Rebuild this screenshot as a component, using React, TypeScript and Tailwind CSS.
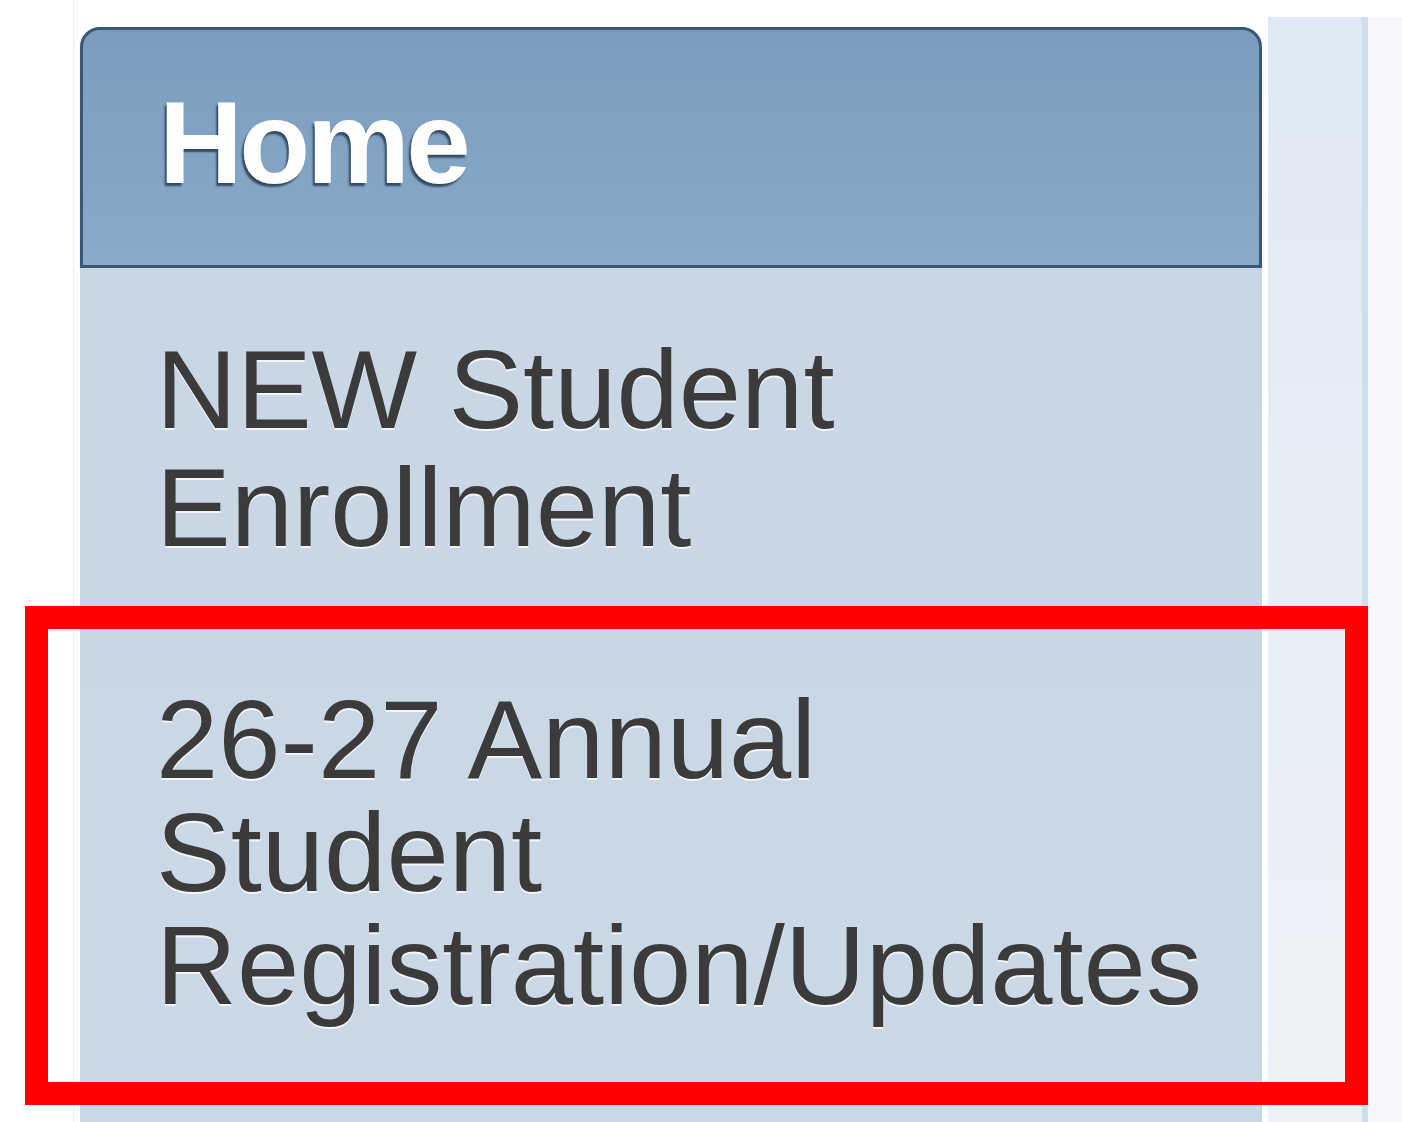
import React from "react";

interface NavItem {
  id: string;
  lines: string[];
  padTop: string;
  leading: string;
  height: string;
  highlighted?: boolean;
}

const items: NavItem[] = [
  {
    id: "enroll",
    lines: ["NEW Student", "Enrollment"],
    padTop: "pt-[63px]",
    leading: "leading-[118px]",
    height: "h-[338px]",
  },
  {
    id: "annual",
    lines: ["26-27 Annual", "Student", "Registration/Updates"],
    padTop: "pt-[77px]",
    leading: "leading-[113px]",
    height: "h-[477px]",
    highlighted: true,
  },
];

export default function App() {
  return (
    <div className="relative h-[1122px] w-full overflow-hidden bg-white font-['Liberation_Sans',Arial,sans-serif]">
      <div className="flex h-full pl-[73px]">
        {/* left menu column */}
        <div className="flex w-[1195px] flex-col border-l border-[#ececec] bg-white pl-[6px] pr-[6px] pt-[27px]">
          <div className="h-[241px] rounded-t-[20px] border-[3px] border-[#3a5873] bg-gradient-to-b from-[#7a9cbe] to-[#89aac9] pl-[76px] pt-[55px] shadow-[0_1px_2px_rgba(0,0,0,0.15)]">
            <span className="block text-[116px] font-bold leading-[116px] tracking-[-3.5px] text-white [text-shadow:-2px_3px_2px_rgba(38,58,80,0.85)]">
              Home
            </span>
          </div>
          <div className="flex-1 bg-gradient-to-b from-[#c9d7e5] to-[#cbd8e6]">
            {items.map((item) => (
              <div
                key={item.id}
                className={`${item.height} ${item.padTop} border-b border-[#b9d2ea] pl-[76px]`}
              >
                {item.lines.map((line) => (
                  <div
                    key={line}
                    className={`${item.leading} whitespace-nowrap text-[112px] text-[#3b3b3b] [text-shadow:0_2px_0_rgba(255,255,255,0.75)]`}
                  >
                    {line}
                  </div>
                ))}
              </div>
            ))}
          </div>
        </div>

        {/* neighbouring content panels */}
        <div className="mt-[17px] w-[100px] border-r-[6px] border-r-[#cfdeed] bg-gradient-to-b from-[#dfe9f4] to-[#eef2f6]" />
        <div className="mt-[17px] flex-1 bg-[#f6f8fb]" />
      </div>

      {/* highlight frame around the annual registration link */}
      <div className="absolute left-[25px] top-[606px] h-[499px] w-[1343px] border-[23px] border-[#ff0000]" />
    </div>
  );
}
